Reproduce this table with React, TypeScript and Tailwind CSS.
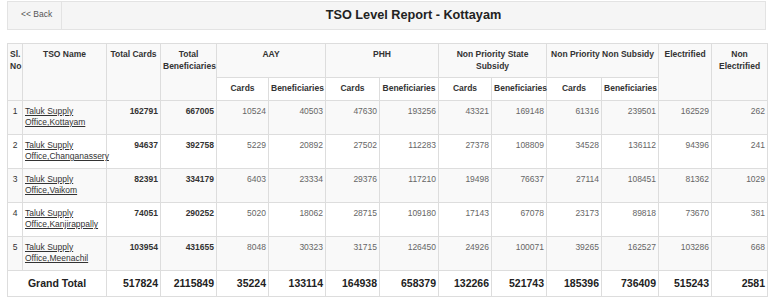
const rows = [
  { sl: 1, name: "Taluk Supply Office,Kottayam", cards: 162791, ben: 667005, vals: [10524, 40503, 47630, 193256, 43321, 169148, 61316, 239501, 162529, 262] },
  { sl: 2, name: "Taluk Supply Office,Changanassery", cards: 94637, ben: 392758, vals: [5229, 20892, 27502, 112283, 27378, 108809, 34528, 136112, 94396, 241] },
  { sl: 3, name: "Taluk Supply Office,Vaikom", cards: 82391, ben: 334179, vals: [6403, 23334, 29376, 117210, 19498, 76637, 27114, 108451, 81362, 1029] },
  { sl: 4, name: "Taluk Supply Office,Kanjirappally", cards: 74051, ben: 290252, vals: [5020, 18062, 28715, 109180, 17143, 67078, 23173, 89818, 73670, 381] },
  { sl: 5, name: "Taluk Supply Office,Meenachil", cards: 103954, ben: 431655, vals: [8048, 30323, 31715, 126450, 24926, 100071, 39265, 162527, 103286, 668] },
];

const totals = [517824, 2115849, 35224, 133114, 164938, 658379, 132266, 521743, 185396, 736409, 515243, 2581];

const widths = [15, 84, 54, 56, 52, 57, 54, 59, 53, 55, 55, 57, 53, 56];

const th = "border border-[#dddddd] px-[2px] pt-[5px] pb-[5px] align-top font-bold text-center";
const td = "border border-[#dddddd] px-[2px] pt-[5px] pb-[5px] align-top";

const App = () => {
  return (
    <div className="w-[773px] h-[302px] bg-white px-[7px] pt-[1px] font-['Liberation_Sans',Arial,sans-serif] text-[#333333] text-[8.5px] leading-[11.5px]">
      <div className="flex h-[29px] border border-[#e3e3e3] bg-[#f5f5f5]">
        <div className="w-[54px] border-r border-[#e3e3e3] pl-[13px] pt-[7px] text-[#555555] text-[8.5px]">
          &lt;&lt; Back
        </div>
        <div className="flex-1 flex items-center justify-center">
          <span className="font-bold text-[12.7px] text-[#222222]">TSO Level Report - Kottayam</span>
        </div>
      </div>

      <table className="mt-[13px] w-[760px] table-fixed border-collapse border border-[#dddddd]">
        <colgroup>
          {widths.map((w, i) => (
            <col key={i} style={{ width: w }} />
          ))}
        </colgroup>
        <tbody>
          <tr className="bg-[#f9f9f9]">
            <th rowSpan={2} className={th + " text-left"}>
              Sl.
              <br />
              No
            </th>
            <th rowSpan={2} className={th}>TSO Name</th>
            <th rowSpan={2} className={th}>Total Cards</th>
            <th rowSpan={2} className={th}>Total Beneficiaries</th>
            <th colSpan={2} className={th}>AAY</th>
            <th colSpan={2} className={th}>PHH</th>
            <th colSpan={2} className={th}>Non Priority State Subsidy</th>
            <th colSpan={2} className={th}>Non Priority Non Subsidy</th>
            <th rowSpan={2} className={th}>Electrified</th>
            <th rowSpan={2} className={th}>Non Electrified</th>
          </tr>
          <tr className="bg-white">
            <th className={th}>Cards</th>
            <th className={th}>Beneficiaries</th>
            <th className={th}>Cards</th>
            <th className={th}>Beneficiaries</th>
            <th className={th}>Cards</th>
            <th className={th}>Beneficiaries</th>
            <th className={th}>Cards</th>
            <th className={th}>Beneficiaries</th>
          </tr>
          {rows.map((r) => (
            <tr key={r.sl} className={r.sl % 2 === 1 ? "bg-[#f9f9f9]" : "bg-white"}>
              <td className={td + " text-center"}>{r.sl}</td>
              <td className={td}>
                <a href="#" className="underline text-[#333333]">
                  {r.name}
                </a>
              </td>
              <td className={td + " text-right font-bold"}>{r.cards}</td>
              <td className={td + " text-right font-bold"}>{r.ben}</td>
              {r.vals.map((v, i) => (
                <td key={i} className={td + " text-right text-[#666666]"}>
                  {v}
                </td>
              ))}
            </tr>
          ))}
          <tr className="bg-white text-[10.5px] leading-[15px] font-bold text-[#222222]">
            <td colSpan={2} className={td + " text-center"}>
              Grand Total
            </td>
            {totals.map((t, i) => (
              <td key={i} className={td + " text-right"}>
                {t}
              </td>
            ))}
          </tr>
        </tbody>
      </table>
    </div>
  );
};

export default App;
